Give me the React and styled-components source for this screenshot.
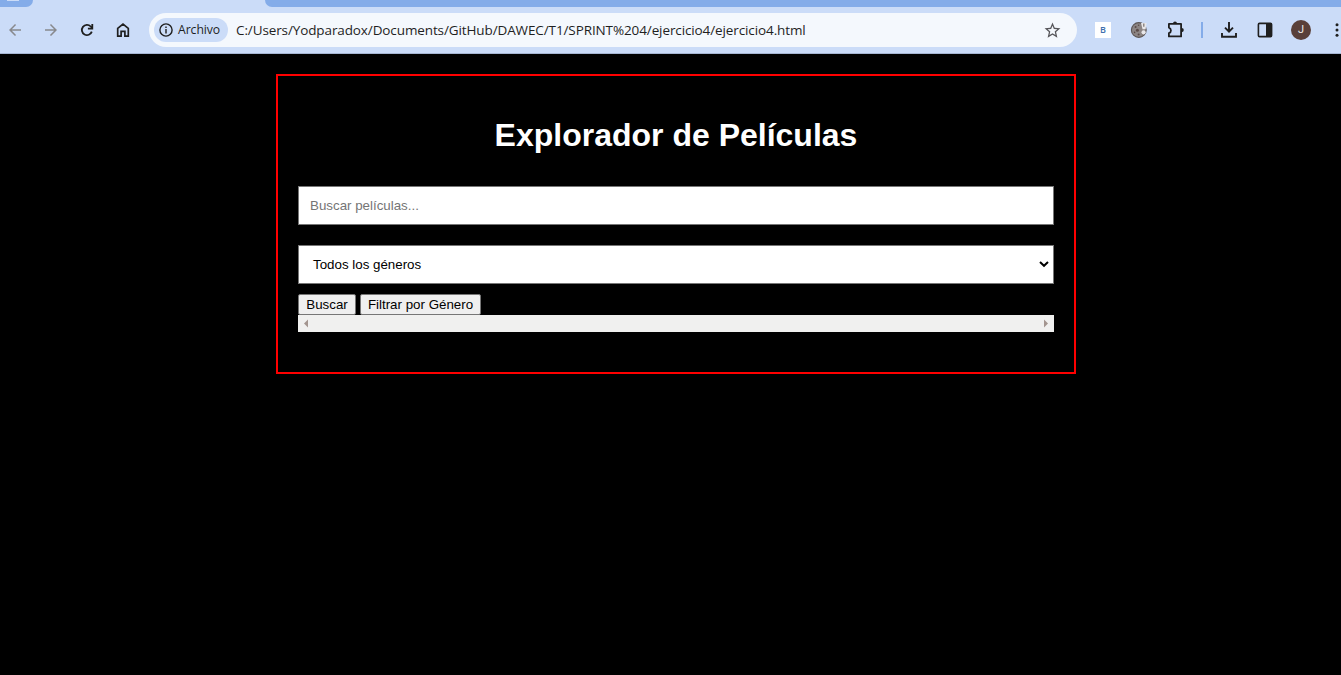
import React from "react";
import styled, { createGlobalStyle } from "styled-components";

const GlobalStyle = createGlobalStyle`
  body { margin: 0; background: #000; overflow: hidden; }
  *, *::before, *::after { box-sizing: border-box; }
`;

const Page = styled.div`
  height: 675px;
  overflow: hidden;
  background: #000;
  font-family: "Liberation Sans", Arial, sans-serif;
`;

const TabStrip = styled.div`
  display: flex;
  height: 7px;
  background: #cbdcf8;
`;

const InactiveTabs = styled.div`
  width: ${(p) => p.$width || "auto"};
  flex: ${(p) => (p.$width ? "none" : 1)};
  margin-left: ${(p) => p.$offset || "0"};
  background: #84ace9;
  border-radius: ${(p) => p.$radius};
`;

const TabMark = styled.div`
  width: 12px;
  height: 1px;
  margin-left: 7px;
  background: #cbdcf8;
`;

const Toolbar = styled.div`
  display: flex;
  align-items: center;
  height: 47px;
  margin-left: -3px;
  width: 1358px;
  background: #cbdcf8;
  border-bottom: 1px solid #a6b6d3;
`;

const IconButton = styled.div`
  display: flex;
  flex: none;
  align-items: center;
  justify-content: center;
  width: 36px;
  height: 36px;
  color: ${(p) => (p.$muted ? "#88898d" : "#1f1f1f")};
  svg { display: block; }
`;

const AddressBar = styled.div`
  display: flex;
  align-items: center;
  flex: none;
  width: 928px;
  height: 34px;
  margin: 0 8px;
  padding: 0 15px 0 5px;
  border-radius: 17px;
  background: #f4f8fd;
  color: #56565a;
`;

const SchemeChip = styled.div`
  display: flex;
  align-items: center;
  flex: none;
  width: 74px;
  height: 24px;
  padding-left: 5px;
  gap: 5px;
  border-radius: 12px;
  background: #cbdcf8;
  color: #1f1f1f;
  font: 12.2px/24px "Open Sans", "Noto Sans", sans-serif;
  letter-spacing: -0.05px;
`;

const Url = styled.div`
  flex: 1;
  margin-left: 8px;
  white-space: nowrap;
  color: #1f1f1f;
  font: 13.5px/20px "Open Sans", "Noto Sans", sans-serif;
  letter-spacing: -0.11px;
`;

const Divider = styled.div`
  flex: none;
  width: 2px;
  height: 16px;
  margin: 0 8px;
  background: #84ace9;
`;

const ExtensionBadge = styled.div`
  width: 16px;
  height: 16px;
  background: #fff;
  color: #3f6fae;
  font: 600 9px/16px "Open Sans", sans-serif;
  text-align: center;
`;

const Avatar = styled.div`
  width: 20px;
  height: 20px;
  border-radius: 50%;
  background: #5a4039;
  color: #efebe9;
  font: 11px/20px Roboto, sans-serif;
  text-align: center;
`;

const Container = styled.main`
  width: 800px;
  height: 300px;
  margin: 20px 0 0 276px;
  padding: 20px;
  border: 2px solid #f00;
`;

const Title = styled.h1`
  margin: 21px 0 32px;
  color: #fff;
  font-size: 32px;
  line-height: 37px;
  text-align: center;
`;

const SearchInput = styled.input`
  display: block;
  width: 100%;
  height: 39px;
  margin: 0 0 20px;
  padding: 0 11px;
  border: 1px solid #767676;
  background: #fff;
  font: 13.333px "Liberation Sans", Arial, sans-serif;
  outline: none;
  &::placeholder { color: #757575; opacity: 1; }
`;

const GenreSelect = styled.div`
  display: flex;
  align-items: center;
  justify-content: space-between;
  height: 39px;
  padding: 0 4px 0 14px;
  border: 1px solid #767676;
  background: #fff;
  color: #000;
  font-size: 13.333px;
`;

const Actions = styled.div`
  display: flex;
  gap: 4px;
  margin-top: 10px;
`;

const ActionButton = styled.button`
  width: ${(p) => p.$width}px;
  height: 21px;
  padding: 0;
  border: 1px solid #767676;
  border-radius: 2px;
  background: #efefef;
  color: #000;
  font: 13.333px/19px "Liberation Sans", Arial, sans-serif;
  white-space: nowrap;
`;

const ScrollTrack = styled.div`
  display: flex;
  align-items: center;
  justify-content: space-between;
  height: 17px;
  padding: 0 6px;
  background: #f0f0ef;
  svg { display: block; }
`;

const MaterialIcon = ({ d, size = 18 }) => (
  <svg width={size} height={size} viewBox="0 0 24 24" fill="currentColor">
    <path d={d} />
  </svg>
);

const HomeIcon = () => (
  <svg width="14" height="16" viewBox="0 0 14 16" fill="none" stroke="currentColor" strokeWidth="1.7">
    <path d="M1.7 6.4 7 2l5.3 4.4v7.8H8.9V9.4H5.1v4.8H1.7z" />
  </svg>
);

const PuzzleIcon = () => (
  <svg width="20" height="20" viewBox="0 0 20 20" fill="none">
    <path
      d="M3.9 3.9h12.2v12.5H3.9v-3.2c2.7-1 2.7-4.6 0-5.6z"
      stroke="currentColor"
      strokeWidth="1.8"
      strokeLinejoin="round"
    />
    <path d="M8 3.4a2 2 0 0 1 4 0zM16.7 8a2.1 2.1 0 0 1 0 4.2z" fill="currentColor" />
  </svg>
);

const DownloadIcon = () => (
  <svg width="18" height="18" viewBox="0 0 18 18" fill="none" stroke="currentColor" strokeWidth="1.9">
    <path d="M9 1v9M5 6.6 9 10.6l4-4M2 12v3.8h14V12" />
  </svg>
);

const PanelIcon = () => (
  <svg width="16" height="16" viewBox="0 0 16 16">
    <rect x="1.4" y="1.4" width="13.2" height="13.2" rx="1.2" fill="none" stroke="currentColor" strokeWidth="1.6" />
    <path d="M9 1h6v14H9z" fill="currentColor" />
  </svg>
);

const CookieIcon = () => (
  <svg width="18" height="18" viewBox="0 0 18 18">
    <circle cx="8.8" cy="9" r="7.4" fill="#8c8584" stroke="#5c5656" strokeWidth="1.1" />
    <g fill="#5a4a47">
      <circle cx="5.6" cy="6" r="1" />
      <circle cx="7.4" cy="9.2" r="1.5" />
      <circle cx="4.6" cy="11.4" r=".8" />
      <circle cx="8.6" cy="13.4" r="1" />
      <circle cx="8.6" cy="4.2" r=".8" />
    </g>
    <path d="M11 2h5.6l-1 6.2h-3z" fill="#e9e8ea" />
    <path d="M13.8 2.4v3.4" stroke="#77706f" strokeWidth="1.2" />
    <circle cx="13.6" cy="11.3" r="2.1" fill="#e9e8ea" />
  </svg>
);

const InfoIcon = () => (
  <svg width="14" height="14" viewBox="0 0 14 14">
    <circle cx="7" cy="7" r="6.1" fill="none" stroke="currentColor" strokeWidth="1.4" />
    <path d="M6.3 6.1h1.4v4.4H6.3zM6.3 3.5h1.4v1.5H6.3z" fill="currentColor" />
  </svg>
);

const StarIcon = () => (
  <MaterialIcon
    size={19}
    d="m22 9.24-7.19-.62L12 2 9.19 8.63 2 9.24l5.46 4.73L5.82 21 12 17.27 18.18 21l-1.63-7.03L22 9.24zM12 15.4l-3.76 2.27 1-4.28-3.32-2.88 4.38-.38L12 6.1l1.71 4.04 4.38.38-3.32 2.88 1 4.28L12 15.4z"
  />
);

const ARROW_BACK = "M20 11H7.83l5.59-5.59L12 4l-8 8 8 8 1.41-1.41L7.83 13H20v-2z";
const ARROW_FORWARD = "m12 4-1.41 1.41L16.17 11H4v2h12.17l-5.58 5.59L12 20l8-8z";

const ReloadIcon = () => (
  <svg width="16" height="16" viewBox="0 0 16 16" fill="none" stroke="currentColor" strokeWidth="1.8">
    <path d="M12.8 9.6A5.1 5.1 0 1 1 11.7 4.5l1.6 1.6" />
    <path d="M13.3 2v4.7H8.9" />
  </svg>
);

const DotsIcon = () => (
  <svg width="4" height="14" viewBox="0 0 4 14" fill="currentColor">
    <circle cx="2" cy="1.8" r="1.5" />
    <circle cx="2" cy="7" r="1.5" />
    <circle cx="2" cy="12.2" r="1.5" />
  </svg>
);

export default function App() {
  return (
    <Page>
      <GlobalStyle />
      <TabStrip>
        <InactiveTabs $width="33px" $radius="0 0 10px 0">
          <TabMark />
        </InactiveTabs>
        <InactiveTabs $offset="232px" $radius="0 0 0 10px" />
      </TabStrip>
      <Toolbar>
        <IconButton $muted><MaterialIcon d={ARROW_BACK} /></IconButton>
        <IconButton $muted><MaterialIcon d={ARROW_FORWARD} /></IconButton>
        <IconButton><ReloadIcon /></IconButton>
        <IconButton><HomeIcon /></IconButton>
        <AddressBar>
          <SchemeChip>
            <InfoIcon />
            <span>Archivo</span>
          </SchemeChip>
          <Url>C:/Users/Yodparadox/Documents/GitHub/DAWEC/T1/SPRINT%204/ejercicio4/ejercicio4.html</Url>
          <StarIcon />
        </AddressBar>
        <IconButton><ExtensionBadge>B</ExtensionBadge></IconButton>
        <IconButton><CookieIcon /></IconButton>
        <IconButton><PuzzleIcon /></IconButton>
        <Divider />
        <IconButton><DownloadIcon /></IconButton>
        <IconButton><PanelIcon /></IconButton>
        <IconButton><Avatar>J</Avatar></IconButton>
        <IconButton><DotsIcon /></IconButton>
      </Toolbar>
      <Container>
        <Title>Explorador de Películas</Title>
        <SearchInput placeholder="Buscar películas..." />
        <GenreSelect>
          Todos los géneros
          <svg width="10" height="9" viewBox="0 0 10 9" fill="none" stroke="#000" strokeWidth="2">
            <path d="M1 2l4 3.8L9 2" />
          </svg>
        </GenreSelect>
        <Actions>
          <ActionButton $width={58}>Buscar</ActionButton>
          <ActionButton $width={121}>Filtrar por Género</ActionButton>
        </Actions>
        <ScrollTrack>
          <svg width="4" height="9" viewBox="0 0 4 9"><path d="M4 .5v8l-4-4z" fill="#a3958f" /></svg>
          <svg width="4" height="9" viewBox="0 0 4 9"><path d="M0 .5v8l4-4z" fill="#a3958f" /></svg>
        </ScrollTrack>
      </Container>
    </Page>
  );
}
